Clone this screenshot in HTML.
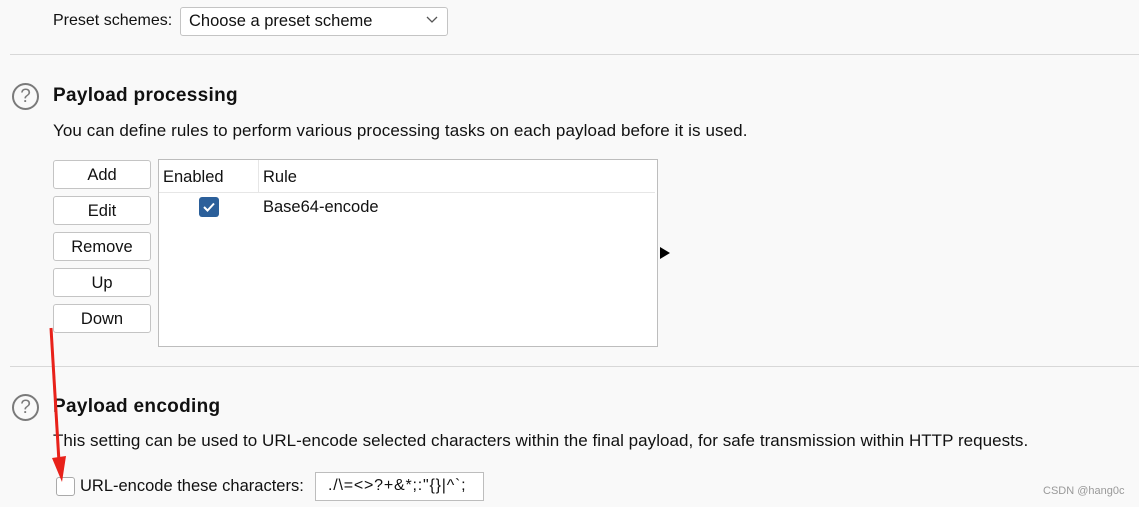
<!DOCTYPE html>
<html><head><style>
body{margin:0;width:1139px;height:507px;background:#f9f9f9;font-family:"Liberation Sans",sans-serif;color:#111;position:relative;overflow:hidden}
.a{position:absolute;white-space:nowrap}
.t{font-size:16.5px}
.h{font-size:19px;font-weight:bold;letter-spacing:0.3px}
.btn{position:absolute;left:53px;width:96px;height:27px;border:1px solid #c4c4c4;border-radius:3px;background:#fff;font-size:16.5px;text-align:center;line-height:29px}
.hr{position:absolute;left:10px;right:0;height:1px;background:#d8d8d8}
.q{position:absolute;width:23px;height:23px;border:2px solid #7a7a7a;border-radius:50%;color:#7a7a7a;font-size:19px;text-align:center;line-height:24px}
</style></head><body>
<div class="a" style="left:53px;top:12px;font-size:16px">Preset schemes:</div>
<div class="a" style="left:180px;top:7px;width:266px;height:27px;border:1px solid #c4c4c4;border-radius:3px;background:#fff"></div>
<div class="a t" style="left:189px;top:12px">Choose a preset scheme</div>
<svg class="a" style="left:426px;top:16px" width="12" height="8"><path d="M1 1L6 6L11 1" stroke="#555" fill="none" stroke-width="1.3"/></svg>
<div class="hr" style="top:54px"></div>
<div class="q" style="left:12px;top:83px">?</div>
<div class="a h" style="left:53px;top:85px">Payload processing</div>
<div class="a" style="left:53px;top:121px;font-size:17px;letter-spacing:0.1px">You can define rules to perform various processing tasks on each payload before it is used.</div>
<div class="btn" style="top:160px">Add</div>
<div class="btn" style="top:196px">Edit</div>
<div class="btn" style="top:232px">Remove</div>
<div class="btn" style="top:268px">Up</div>
<div class="btn" style="top:304px">Down</div>
<div class="a" style="left:158px;top:159px;width:498px;height:186px;border:1px solid #bdbdbd;background:#fff"></div>
<div class="a" style="left:159px;top:192px;width:496px;height:1px;background:#e6e6e6"></div>
<div class="a" style="left:258px;top:160px;width:1px;height:32px;background:#e6e6e6"></div>
<div class="a t" style="left:163px;top:168px">Enabled</div>
<div class="a t" style="left:263px;top:168px">Rule</div>
<div class="a" style="left:199px;top:197px;width:20px;height:20px;border-radius:3px;background:#2b5f9a"></div>
<svg class="a" style="left:199px;top:197px" width="20" height="20"><path d="M5 10L8.5 13.5L15 6.5" stroke="#fff" stroke-width="2" fill="none"/></svg>
<div class="a t" style="left:263px;top:198px">Base64-encode</div>
<svg class="a" style="left:660px;top:247px" width="10" height="12"><path d="M0 0L10 6L0 12Z" fill="#000"/></svg>
<div class="hr" style="top:366px"></div>
<div class="q" style="left:12px;top:394px">?</div>
<div class="a h" style="left:53px;top:396px">Payload encoding</div>
<div class="a" style="left:53px;top:431px;font-size:17px;letter-spacing:0.04px">This setting can be used to URL-encode selected characters within the final payload, for safe transmission within HTTP requests.</div>
<div class="a" style="left:56px;top:477px;width:17px;height:17px;border:1px solid #aaa;border-radius:3px;background:#fff"></div>
<div class="a t" style="left:80px;top:477px">URL-encode these characters:</div>
<div class="a" style="left:315px;top:472px;width:167px;height:27px;border:1px solid #bdbdbd;background:#fff"></div>
<div class="a" style="left:328px;top:477px;font-size:16px;letter-spacing:0.8px">./\=&lt;&gt;?+&amp;*;:"{}|^`;</div>
<div class="a" style="left:1043px;top:485px;font-size:11px;color:#999">CSDN @hang0c</div>
<svg class="a" style="left:0;top:0" width="1139" height="507"><path d="M51 328L59 462" stroke="#e8211a" stroke-width="3"/><path d="M52 458L66 456L62 482Z" fill="#e8211a"/></svg>
</body></html>
